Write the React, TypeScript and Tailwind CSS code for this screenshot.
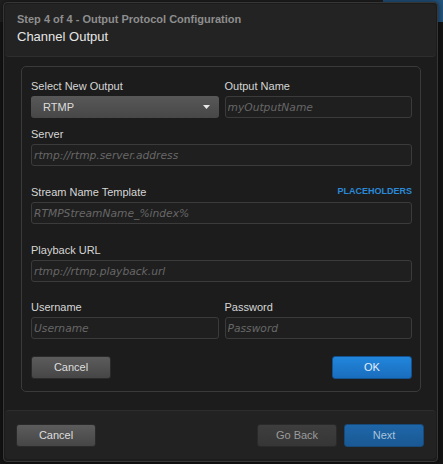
const sans = 'font-["Liberation_Sans",Arial,sans-serif]'

function Label({ children }: { children: React.ReactNode }) {
  return <div className="text-[11px] leading-[14px] text-[#d6d6d6] mb-[3px]">{children}</div>
}

function TextInput({ placeholder }: { placeholder: string }) {
  return (
    <input
      placeholder={placeholder}
      className='block w-full h-[22px] rounded-[3px] border border-[#3b3b3b] bg-[#1f1f1f] px-[2px] text-[10.7px] italic text-[#ccc] placeholder:text-[#676767] font-["DejaVu_Sans",Verdana,sans-serif] outline-none'
    />
  )
}

function Button({ children, variant = 'gray' }: { children: React.ReactNode; variant?: 'gray' | 'blue' | 'dim' | 'navy' }) {
  const styles = {
    gray: 'bg-gradient-to-b from-[#5c5c5c] to-[#464646] text-[#dedede] border-[#2a2a2a]',
    blue: 'bg-gradient-to-b from-[#2186dc] to-[#1a6dbd] text-[#e4eef8] border-[#14528f]',
    dim: 'bg-gradient-to-b from-[#3e3e3e] to-[#363636] text-[#9a9a9a] border-[#2a2a2a]',
    navy: 'bg-gradient-to-b from-[#1e66a8] to-[#1a5994] text-[#a9c3dc] border-[#164a7a]',
  }[variant]
  return (
    <button className={`w-[80px] h-[23px] rounded-[3px] border text-[11px] ${styles}`}>{children}</button>
  )
}

export default function App() {
  return (
    <div className={`relative w-[443px] h-[464px] overflow-hidden bg-[#141414] ${sans}`}>
      <div className="flex h-[22px]">
        <div className="flex-1 bg-[#202020]" />
        <div className="w-[60px] bg-[#24547e]" />
      </div>

      <div className="absolute left-[3px] top-[2px] w-[435px] h-[460px] flex flex-col rounded-[4px] border border-[#363636] bg-[#1c1c1c] p-px shadow-[0_0_6px_rgba(0,0,0,0.6)]">
        <div className="h-[53px] shrink-0 rounded-[4px] border-b border-[#2e2e2e] bg-[#232323] px-[12px] pt-[8px]">
          <div className="text-[11px] leading-[14px] font-bold text-[#8e8e8e]">Step 4 of 4 - Output Protocol Configuration</div>
          <div className="mt-[3px] text-[13px] leading-[16px] text-[#e6e6e6]">Channel Output</div>
        </div>

        <div className="flex-1 pl-[16px] pr-[15px] pt-[9px]">
          <div className="rounded-[5px] border border-[#3a3a3a] pl-[9px] pr-[8px] pt-[12px] pb-[12px]">
            <div className="grid grid-cols-2 gap-x-[6px]">
              <div>
                <Label>Select New Output</Label>
                <div className="flex h-[22px] items-center justify-between rounded-[3px] bg-gradient-to-b from-[#585858] to-[#474747] pl-[12px] pr-[9px] text-[11px] text-[#dcdcdc]">
                  <span>RTMP</span>
                  <svg width="7" height="4" viewBox="0 0 7 4">
                    <path d="M0 0h7L3.5 4z" fill="#e8e8e8" />
                  </svg>
                </div>
              </div>
              <div>
                <Label>Output Name</Label>
                <TextInput placeholder="myOutputName" />
              </div>
            </div>

            <div className="mt-[9px]">
              <Label>Server</Label>
              <TextInput placeholder="rtmp://rtmp.server.address" />
            </div>

            <div className="mt-[19px]">
              <div className="flex items-center justify-between">
                <Label>Stream Name Template</Label>
                <span className="mb-[3px] text-[9px] font-semibold text-[#2a8ad8]">PLACEHOLDERS</span>
              </div>
              <TextInput placeholder="RTMPStreamName_%index%" />
            </div>

            <div className="mt-[19px]">
              <Label>Playback URL</Label>
              <TextInput placeholder="rtmp://rtmp.playback.url" />
            </div>

            <div className="mt-[18px] grid grid-cols-2 gap-x-[6px]">
              <div>
                <Label>Username</Label>
                <TextInput placeholder="Username" />
              </div>
              <div>
                <Label>Password</Label>
                <TextInput placeholder="Password" />
              </div>
            </div>

            <div className="mt-[17px] flex justify-between">
              <Button>Cancel</Button>
              <Button variant="blue">OK</Button>
            </div>
          </div>
        </div>

        <div className="h-[49px] shrink-0 flex items-center justify-between rounded-[4px] border-t border-[#2e2e2e] bg-[#222222] pl-[11px] pr-[12px] mb-px">
          <Button>Cancel</Button>
          <div className="flex gap-[7px]">
            <Button variant="dim">Go Back</Button>
            <Button variant="navy">Next</Button>
          </div>
        </div>
      </div>
    </div>
  )
}
